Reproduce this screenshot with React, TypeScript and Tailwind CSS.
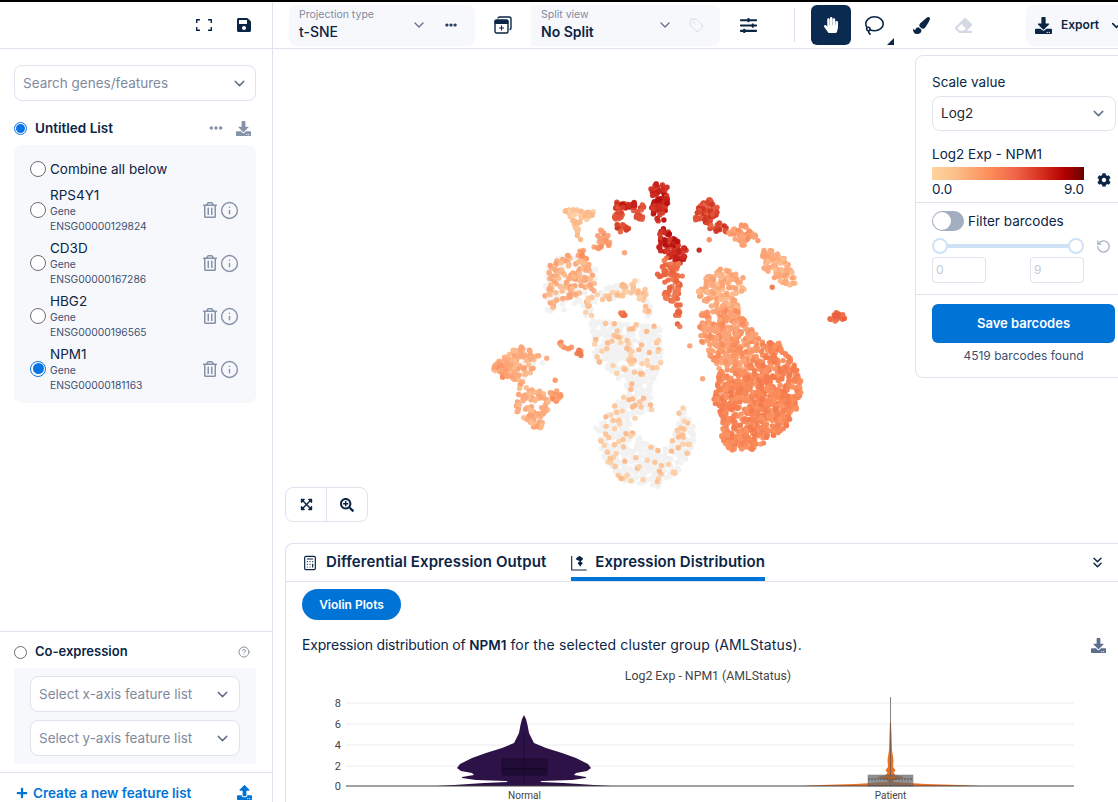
import {
  Calculator,
  ChevronDown,
  ChevronsDown,
  CircleHelp,
  Ellipsis,
  Info,
  Lasso,
  RotateCcw,
  Tag,
} from "lucide-react";
import {
  FaCog,
  FaDownload,
  FaEraser,
  FaExpandArrowsAlt,
  FaHandPaper,
  FaPaintBrush,
  FaPlus,
  FaRegTrashAlt,
  FaSave,
  FaSearchPlus,
  FaSlidersH,
  FaUpload,
} from "react-icons/fa";

const font = { fontFamily: "Inter, 'Noto Sans', sans-serif" };

const genes = [
  { name: "RPS4Y1", id: "ENSG00000129824" },
  { name: "CD3D", id: "ENSG00000167286" },
  { name: "HBG2", id: "ENSG00000196565" },
  { name: "NPM1", id: "ENSG00000181163", selected: true },
];

// cluster outline (x, y pairs, in a 3x grid over the plot), dot count, colours
type Cluster = [number[], number, string[]];

const gray = ["#f1f1f1"];
const pale = ["#fdd0a6", "#fdc397", "#fcb88a"];
const light = ["#fdbb8c", "#fcab7e", "#fca272"];
const mid = ["#fca274", "#fb9666", "#fa8c5c", "#fba378"];
const warm = ["#fa8a58", "#f78253", "#f57a4d", "#fb9262"];
const hot = ["#ee6a44", "#e9603c", "#f07a50"];
const red = ["#d9442c", "#e0523a", "#cf3322", "#e8633f"];
const dark = ["#c4201a", "#cf2c20", "#b80f10", "#d6392a"];

const clusters: Cluster[] = [
  // grey background cells
  [[190, 300, 260, 240, 350, 300, 350, 400, 250, 420, 200, 430], 90, gray],
  [[320, 370, 490, 325, 520, 440, 495, 440, 470, 370, 340, 400, 340, 440, 315, 440], 50, gray],
  [[330, 450, 540, 470, 545, 580, 510, 650, 520, 720, 430, 710, 440, 640, 400, 620, 345, 570, 340, 500], 340, gray],
  [[345, 770, 430, 680, 520, 700, 440, 770, 500, 820, 570, 840, 600, 690, 640, 770, 650, 830, 620, 880, 540, 950, 420, 930, 370, 860], 420, gray],
  [[40, 600, 60, 545, 215, 560, 130, 640], 16, gray],
  // right mass
  [[680, 320, 730, 290, 790, 320, 795, 360, 760, 375, 780, 420, 700, 420, 650, 370], 135, light],
  [[665, 420, 780, 420, 810, 470, 850, 510, 800, 600, 720, 600, 680, 550, 655, 500], 280, mid],
  [[850, 510, 900, 520, 950, 590, 970, 640, 960, 690, 930, 760, 880, 800, 820, 840, 760, 850, 725, 810, 720, 740, 700, 690, 720, 600, 800, 600], 780, warm],
  // top reds
  [[500, 50, 540, 35, 575, 60, 565, 100, 555, 155, 535, 155, 510, 120, 525, 85, 505, 65], 75, dark],
  [[400, 150, 410, 95, 490, 100, 495, 150, 470, 160, 465, 125, 430, 125, 425, 150], 52, red],
  [[420, 100, 470, 95, 465, 115, 425, 115], 12, dark],
  [[400, 160, 450, 165, 445, 190, 420, 185], 14, red],
  [[540, 175, 555, 175, 610, 230, 630, 250, 600, 280, 545, 250, 535, 240], 90, dark],
  [[530, 320, 545, 255, 600, 280, 610, 310, 590, 400, 555, 390, 545, 350, 560, 320], 72, hot],
  [[590, 400, 605, 400, 600, 440, 605, 480, 575, 450, 590, 430], 12, hot],
  [[650, 120, 685, 80, 715, 95, 710, 150, 750, 180, 720, 195, 680, 185, 670, 150, 645, 150], 78, red],
  // right arm
  [[720, 190, 790, 160, 840, 210, 830, 230, 780, 225, 750, 195], 40, mid],
  [[850, 230, 920, 265, 950, 340, 920, 350, 860, 310, 845, 280], 85, light],
  // upper left
  [[248, 115, 350, 125, 320, 150, 270, 140], 28, pale],
  [[275, 150, 300, 150, 310, 220, 285, 220], 12, pale],
  [[330, 235, 360, 175, 400, 205, 380, 240], 28, mid],
  [[300, 230, 330, 240, 320, 280, 290, 270], 12, mid],
  [[205, 290, 250, 250, 330, 285, 355, 320, 340, 370, 260, 390, 215, 430, 190, 370], 110, light],
  [[320, 370, 490, 325, 520, 440, 495, 440, 470, 370, 340, 400, 340, 440, 315, 440], 48, pale],
  [[420, 425, 442, 425, 440, 438, 422, 438], 5, hot],
  // grey middle and bottom, pale cells on top
  [[330, 450, 540, 470, 545, 580, 510, 650, 520, 720, 430, 710, 440, 640, 400, 620, 345, 570, 340, 500], 62, pale],
  [[345, 770, 430, 680, 520, 700, 440, 770, 500, 820, 570, 840, 600, 690, 640, 770, 650, 830, 620, 880, 540, 950, 420, 930, 370, 860], 78, pale],
  // left
  [[40, 600, 60, 545, 120, 525, 215, 560, 180, 575, 130, 640, 100, 630], 95, light],
  [[40, 590, 90, 575, 100, 630, 60, 620], 20, mid],
  [[105, 720, 120, 640, 190, 660, 210, 700, 185, 775, 150, 770], 85, light],
  [[205, 670, 235, 660, 248, 685, 220, 700], 16, mid],
  [[225, 505, 310, 545, 295, 565, 240, 530], 9, mid],
  [[290, 540, 308, 540, 308, 562, 290, 562], 5, hot],
  // far right
  [[1040, 450, 1065, 425, 1105, 440, 1080, 455], 18, hot],
  // single cells
  [[433, 246, 437, 246, 437, 250, 433, 250], 1, mid],
  [[626, 525, 630, 525, 630, 529, 626, 529], 1, mid],
  [[666, 626, 670, 626, 670, 630, 666, 630], 1, mid],
  [[656, 240, 660, 240, 660, 244, 656, 244], 1, dark],
  [[684, 206, 688, 206, 688, 210, 684, 210], 1, mid],
  [[876, 348, 880, 348, 880, 352, 876, 352], 1, hot],
  [[225, 628, 229, 628, 229, 632, 225, 632], 1, mid],
];

function inside(poly: number[], x: number, y: number) {
  let hit = false;
  const n = poly.length / 2;
  for (let i = 0, j = n - 1; i < n; j = i++) {
    const xi = poly[i * 2];
    const yi = poly[i * 2 + 1];
    const xj = poly[j * 2];
    const yj = poly[j * 2 + 1];
    if (yi > y !== yj > y && x < ((xj - xi) * (y - yi)) / (yj - yi) + xi) hit = !hit;
  }
  return hit;
}

function makePoints() {
  let seed = 12345;
  const rand = () => {
    seed = (seed + 0x6d2b79f5) | 0;
    let t = Math.imul(seed ^ (seed >>> 15), 1 | seed);
    t = (t + Math.imul(t ^ (t >>> 7), 61 | t)) ^ t;
    return ((t ^ (t >>> 14)) >>> 0) / 4294967296;
  };
  const pts: { x: number; y: number; c: string }[] = [];
  for (const [poly, n, colors] of clusters) {
    const xs = poly.filter((_, i) => i % 2 === 0);
    const ys = poly.filter((_, i) => i % 2 === 1);
    const x0 = Math.min(...xs);
    const x1 = Math.max(...xs);
    const y0 = Math.min(...ys);
    const y1 = Math.max(...ys);
    let placed = 0;
    while (placed < n) {
      const x = x0 + rand() * (x1 - x0);
      const y = y0 + rand() * (y1 - y0);
      if (!inside(poly, x, y)) continue;
      pts.push({
        x: 480 + x / 3,
        y: 170 + y / 3,
        c: colors[Math.floor(rand() * colors.length)],
      });
      placed++;
    }
  }
  return pts;
}

const points = makePoints();

function violinPath(cx: number, profile: number[][]) {
  const right = profile.map(([y, w]) => `${cx + w},${y}`);
  const left = [...profile].reverse().map(([y, w]) => `${cx - w},${y}`);
  return `M${right.join(" L")} L${left.join(" L")} Z`;
}

const normalViolin = [
  [715, 0], [719, 2], [725, 3.500], [733, 5], [743, 10], [748, 22], [753, 38], [758, 52],
  [764, 64], [768, 67], [771, 63], [773, 52], [775, 50], [777, 62], [778, 62], [780, 48],
  [781, 18], [782, 16], [783, 40], [785, 70], [786, 88],
];
const patientViolin = [
  [722, 0.500], [735, 1], [750, 1.500], [760, 3], [767, 2.500], [770, 5], [773, 3], [775, 5],
  [777, 13], [778, 12], [780, 3], [782, 3], [784, 35], [785, 70], [786, 90],
];

function Scatter() {
  return (
    <svg viewBox="273 49 845 494" className="block h-full w-full">
      {points.map((p, i) => (
        <circle key={i} cx={p.x} cy={p.y} r={2.700} fill={p.c} opacity={0.95} />
      ))}
    </svg>
  );
}

function ViolinChart() {
  return (
    <svg viewBox="286 664 832 138" className="block h-[138px] w-[832px] shrink-0">
      <g fontFamily="Roboto, sans-serif" fontSize="11" fill="#444">
        <text x="708" y="680" textAnchor="middle" fontSize="12.300">Log2 Exp - NPM1 (AMLStatus)</text>
        {[
          [703, "8"],
          [724, "6"],
          [745, "4"],
          [766, "2"],
          [786, "0"],
        ].map(([y, t]) => (
          <g key={t}>
            <text x="341" y={Number(y) + 4} textAnchor="end">{t}</text>
            {t !== "0" && <line x1="346" x2="1074" y1={y} y2={y} stroke="#ececec" />}
          </g>
        ))}
        <path d={violinPath(524, normalViolin)} fill="#2d1248" />
        <rect x="502" y="759" width="45" height="16" fill="#200c36" stroke="#16082a" strokeWidth="0.600" />
        <line x1="502" x2="547" y1="769" y2="769" stroke="#0f0520" />
        <line x1="524" x2="524" y1="733" y2="786" stroke="#16082a" strokeWidth="0.700" />
        <path d={violinPath(890.500, patientViolin)} fill="#ee6f1f" />
        <line x1="890.500" x2="890.500" y1="697" y2="786" stroke="#555" strokeWidth="0.900" opacity="0.800" />
        <rect x="868" y="775" width="45" height="11" fill="#6b6b6b" opacity="0.750" stroke="#555" strokeWidth="0.500" />
        <line x1="868" x2="913" y1="779" y2="779" stroke="#333" strokeDasharray="2 1" strokeWidth="0.700" />
        <path d="M884 777h13l-6.500 2.500z" fill="#c85a14" />
        <line x1="346" x2="1074" y1="786" y2="786" stroke="#444" strokeWidth="1" />
        <text x="524.500" y="799" textAnchor="middle" fontSize="10">Normal</text>
        <text x="890.500" y="799" textAnchor="middle" fontSize="10">Patient</text>
      </g>
    </svg>
  );
}

function Radio({ checked, big }: { checked?: boolean; big?: boolean }) {
  const size = big ? "h-4 w-4" : "h-[13px] w-[13px]";
  if (checked) {
    return (
      <span className={`flex ${size} shrink-0 items-center justify-center rounded-full border border-[#0a74e6] bg-white`}>
        <span className={`${big ? "h-[11px] w-[11px]" : "h-[9px] w-[9px]"} rounded-full bg-[#0a74e6]`} />
      </span>
    );
  }
  return <span className={`block ${size} shrink-0 rounded-full border border-[#6d6d6d] bg-white`} />;
}

function SelectBox({ label, className }: { label: string; className: string }) {
  return (
    <div className={`flex items-center justify-between rounded-lg border border-[#dfe2ec] bg-white text-[13.500px] text-[#7f8a9e] ${className}`}>
      <span>{label}</span>
      <ChevronDown size={17} strokeWidth={2} className="text-[#64718a]" />
    </div>
  );
}

function FullscreenIcon() {
  return (
    <svg width="16" height="12" viewBox="0 0 16 12" fill="none" stroke="#0b2545" strokeWidth="1.400">
      <path d="M0.700 4V0.700H4M12 0.700h3.300V4M0.700 8v3.300H4M12 11.300h3.300V8" />
    </svg>
  );
}

function WindowPlusIcon() {
  return (
    <svg width="18" height="18" viewBox="0 0 18 18" fill="none" stroke="#0b2545">
      <path d="M4 2.500a1.500 1.500 0 0 1 1.500-1.500h9.500a2 2 0 0 1 2 2v9a1.500 1.500 0 0 1-1.500 1.500" strokeWidth="1.400" />
      <rect x="1" y="4" width="13" height="13" rx="1.500" strokeWidth="1.400" />
      <path d="M1 4.500h13v3H1z" fill="#0b2545" />
      <path d="M7.500 9.500v5M5 12h5" strokeWidth="1.100" />
    </svg>
  );
}

function DistributionIcon() {
  return (
    <svg width="16" height="16" viewBox="0 0 16 16" fill="none">
      <path d="M0.700 1v14h15" stroke="#0b2545" strokeWidth="1.100" />
      <path d="M8.500 1c1 0.800 3.500 1.500 3.500 3 0 1.300-2 1.500-2.200 2.500 0.600 0.800 1.800 0.800 1.800 1.800 0 1-1.800 1.200-2.400 3.700-0.600-2.500-2.400-2.700-2.400-3.700 0-1 1.200-1 1.800-1.800C8.300 5.500 5 5.300 5 4c0-1.500 2.500-2.200 3.500-3z" fill="#0b2545" />
    </svg>
  );
}

function Sidebar() {
  return (
    <aside className="flex w-[273px] shrink-0 flex-col border-r border-[#dfe2ec]">
      <div className="flex-1 px-3.5 pt-4">
        <SelectBox label="Search genes/features" className="h-9 w-[242px] pl-2 pr-[7px]" />
        <div className="mt-[20px] flex h-[14px] w-[242px] items-center text-[13.500px] font-semibold text-[#0b2545]">
          <Radio checked />
          <span className="ml-2 flex-1">Untitled List</span>
          <Ellipsis size={16} strokeWidth={3} className="mr-[12px] text-[#808b9f]" />
          <FaDownload size={15} className="mr-[5px] text-[#8592a8]" />
        </div>
        <div className="mt-[10px] h-[258px] w-[242px] rounded-lg bg-[#f7f8fc] pl-4 pt-4">
          <div className="flex h-4 items-center gap-1 text-[13.500px] text-[#0b2545]">
            <Radio big />
            <span>Combine all below</span>
          </div>
          <div className="mt-[5px] flex flex-col">
            {genes.map((g) => (
              <div key={g.name} className="flex h-[53px] items-center">
                <div className="mt-[2px] shrink-0">
                  <Radio big checked={g.selected} />
                </div>
                <div className="ml-1 w-[152px] pt-[2px]">
                  <div className="text-[13.500px] leading-[18px] text-[#0b2545]">{g.name}</div>
                  <div className="text-[10.300px] leading-[15px] text-[#3d5070]">Gene</div>
                  <div className="text-[10.300px] leading-[15px] text-[#3d5070]">{g.id}</div>
                </div>
                <FaRegTrashAlt size={16} className="mt-[3px] text-[#8592a8]" />
                <Info size={19} strokeWidth={1.800} className="ml-[2px] mt-[3px] text-[#8592a8]" />
              </div>
            ))}
          </div>
        </div>
      </div>
      <div className="h-[141px] border-t border-[#dfe2ec] px-3.5">
        <div className="flex h-9 w-[242px] items-center pt-[4px] text-[13px] font-semibold text-[#0b2545]">
          <Radio />
          <span className="ml-2 flex-1">Co-expression</span>
          <CircleHelp size={12} className="mr-[6px] text-[#8592a8]" />
        </div>
        <div className="flex h-24 w-[242px] flex-col gap-2 bg-[#f7f8fc] px-4 pt-2">
          <SelectBox label="Select x-axis feature list" className="h-9 pl-2 pr-2" />
          <SelectBox label="Select y-axis feature list" className="h-9 pl-2 pr-2" />
        </div>
      </div>
      <div className="flex h-[30px] items-start justify-between border-t border-[#dfe2ec] px-4 pt-3 text-[13.500px] font-semibold text-[#0073d6]">
        <span className="flex items-center gap-[5px] leading-4">
          <FaPlus size={12} />
          Create a new feature list
        </span>
        <FaUpload size={15} className="mr-[4px]" />
      </div>
    </aside>
  );
}

function Header() {
  return (
    <header className="flex h-[47px] shrink-0 border-b border-[#dfe2ec] text-[#0b2545]">
      <div className="flex w-[273px] shrink-0 items-center justify-end border-r border-[#dfe2ec] pr-[20px]">
        <FullscreenIcon />
        <FaSave size={16} className="ml-[24px]" />
      </div>
      <div className="flex items-center">
        <div className="ml-4 flex h-[41px] w-[186px] items-center rounded-lg bg-[#f7f8fc] pl-[10px]">
          <div className="w-[112px]">
            <div className="text-[10.500px] leading-[14px] text-[#7f8a9e]">Projection type</div>
            <div className="text-sm font-medium leading-[20px]">t-SNE</div>
          </div>
          <ChevronDown size={16} strokeWidth={2} className="text-[#64718a]" />
          <Ellipsis size={14} strokeWidth={3.500} className="ml-[17px]" />
        </div>
        <div className="flex w-[56px] justify-center">
          <WindowPlusIcon />
        </div>
        <div className="flex h-[41px] w-[189px] items-center rounded-r-lg bg-[#f7f8fc] pl-[10px]">
          <div className="w-[116px]">
            <div className="text-[10.500px] leading-[14px] text-[#7f8a9e]">Split view</div>
            <div className="text-sm font-semibold leading-[20px]">No Split</div>
          </div>
          <ChevronDown size={16} strokeWidth={2} className="text-[#64718a]" />
          <Tag size={15} strokeWidth={1.500} className="ml-[16px] text-[#d3d8e2]" />
        </div>
        <FaSlidersH size={17} className="ml-[20px]" />
        <div className="ml-[37px] h-[34px] w-px bg-[#dfe2ec]" />
        <div className="ml-4 flex h-10 w-10 items-center justify-center rounded-md bg-[#0b2a4f]">
          <FaHandPaper size={16} className="text-white" />
        </div>
        <div className="relative flex w-[47px] justify-center">
          <Lasso size={21} strokeWidth={1.800} />
          <span className="absolute left-[36px] top-[23px] h-0 w-0 border-b-[7px] border-l-[7px] border-b-[#0b2545] border-l-transparent" />
        </div>
        <FaPaintBrush size={17} className="ml-[15px] mr-[25px]" />
        <FaEraser size={17} className="text-[#d3d8e2]" />
        <div className="ml-[54px] flex h-[41px] w-[110px] shrink-0 items-center rounded-l-lg bg-[#f7f8fc] pl-[9px] text-xs font-semibold">
          <FaDownload size={17} />
          <span className="ml-[9px]">Export</span>
          <ChevronDown size={15} strokeWidth={2.500} className="ml-[10px]" />
        </div>
      </div>
    </header>
  );
}

function ScalePanel() {
  return (
    <div className="absolute right-[-2px] top-[6px] h-[323px] w-[205px] rounded-l-lg border border-[#dfe2ec] bg-white text-[13.500px] text-[#0b2545]">
      <div className="px-4 pt-[17px] leading-[18px]">Scale value</div>
      <div className="ml-4 mt-[5px] flex h-[35px] w-[184px] items-center justify-between rounded-lg border border-[#dfe2ec] px-2 text-[#22272f]">
        <span>Log2</span>
        <ChevronDown size={17} className="text-[#64718a]" />
      </div>
      <div className="px-4 pt-[14px] leading-[18px]">Log2 Exp - NPM1</div>
      <div className="flex pl-4 pt-[4px]">
        <div className="w-[152px] shrink-0">
          <div className="h-[13px] bg-[linear-gradient(to_right,#fdd49e,#fdc08a_15%,#fc8d59_38%,#ef6548_55%,#d7301f_72%,#b30000_87%,#6b0000)]" />
          <div className="flex justify-between leading-[18px]">
            <span>0.0</span>
            <span>9.0</span>
          </div>
        </div>
        <FaCog size={14} className="ml-[13px] mt-[6px] shrink-0" />
      </div>
      <div className="mt-[4px] border-t border-[#dfe2ec] px-4 pt-[8px]">
        <div className="flex items-center">
          <span className="flex h-5 w-8 items-center rounded-full bg-[#a3aec2] pl-[1px]">
            <span className="h-[18px] w-[18px] rounded-full bg-white" />
          </span>
          <span className="ml-1">Filter barcodes</span>
        </div>
        <div className="mt-[7px] flex items-center">
          <div className="relative h-4 w-[152px] shrink-0">
            <div className="absolute left-[7px] right-[7px] top-[6px] h-1 bg-[#cfe2f5]" />
            <span className="absolute left-0 top-0 h-4 w-4 rounded-full border-2 border-[#cfe2f5] bg-white" />
            <span className="absolute right-0 top-0 h-4 w-4 rounded-full border-2 border-[#cfe2f5] bg-white" />
          </div>
          <RotateCcw size={15} className="ml-[12px] shrink-0 text-[#a3aec2]" />
        </div>
        <div className="mt-[3px] flex w-[152px] justify-between text-xs text-[#c3c9d4]">
          <span className="flex h-[26px] w-[54px] items-center rounded-sm border border-[#dfe2ec] pl-[3px]">0</span>
          <span className="flex h-[26px] w-[54px] items-center rounded-sm border border-[#dfe2ec] pl-[3px]">9</span>
        </div>
      </div>
      <div className="mt-[11px] border-t border-[#dfe2ec] px-4 pt-[9px]">
        <div className="flex h-[39px] w-[183px] items-center justify-center rounded-md bg-[#0073d6] text-[13px] font-semibold text-white">
          Save barcodes
        </div>
        <div className="mt-[6px] w-[183px] text-center text-xs leading-[14px] text-[#3d5070]">4519 barcodes found</div>
      </div>
    </div>
  );
}

function BottomPanel() {
  return (
    <section className="ml-3 flex h-[259px] shrink-0 flex-col overflow-hidden rounded-tl-lg border-l border-t border-[#dfe2ec] text-[#0b2545]">
      <div className="flex h-[38px] shrink-0 items-end border-b border-[#dfe2ec] pl-[16px]">
        <div className="flex h-[37px] shrink-0 items-center whitespace-nowrap text-[15px] font-semibold tracking-[0.1px]">
          <Calculator size={16} strokeWidth={1.800} />
          <span className="ml-[8px]">Differential Expression Output</span>
        </div>
        <div className="ml-[25px] flex h-[37px] w-[194px] shrink-0 items-center whitespace-nowrap border-b-4 border-[#0073d6] pt-[4px] text-[15px] font-semibold tracking-[0.05px]">
          <DistributionIcon />
          <span className="ml-2">Expression Distribution</span>
        </div>
        <ChevronsDown size={17} strokeWidth={2} className="mb-[10px] ml-[324px] shrink-0" />
      </div>
      <div className="pl-4 pt-[7px]">
        <div className="flex h-[31px] w-[99px] items-center justify-center rounded-full bg-[#0073d6] text-xs font-semibold text-white">
          Violin Plots
        </div>
      </div>
      <div className="flex h-[44px] shrink-0 items-center pb-[4px] pl-4 pt-[10px] text-sm">
        <span className="w-[789px] shrink-0">
          <span className="tracking-[-0.19px]">Expression distribution of </span>
          <b className="text-[13.500px] font-semibold">NPM1</b>
          <span className="tracking-[0.14px]"> for the selected cluster group (AMLStatus).</span>
        </span>
        <FaDownload size={15} className="shrink-0 text-[#5d6e8a]" />
      </div>
      <ViolinChart />
    </section>
  );
}

export default function App() {
  return (
    <div style={font} className="flex h-[802px] w-[1118px] flex-col overflow-hidden border-t-2 border-black bg-white">
      <Header />
      <div className="flex min-h-0 flex-1">
        <Sidebar />
        <main className="flex min-w-0 flex-1 flex-col">
          <div className="relative min-h-0 flex-1">
            <Scatter />
            <ScalePanel />
            <div className="absolute bottom-[21px] left-3 flex h-[35px] w-[83px] rounded-lg border border-[#dfe2ec] bg-white text-[#0b2545]">
              <div className="flex w-[41px] items-center justify-center border-r border-[#dfe2ec]">
                <FaExpandArrowsAlt size={13} />
              </div>
              <div className="flex flex-1 items-center justify-center">
                <FaSearchPlus size={14} />
              </div>
            </div>
          </div>
          <BottomPanel />
        </main>
      </div>
    </div>
  );
}
